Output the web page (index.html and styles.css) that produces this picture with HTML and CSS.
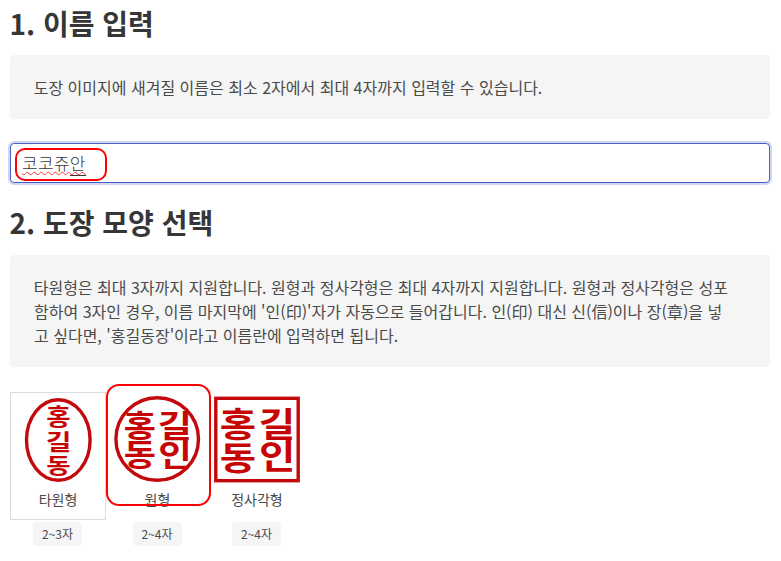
FILE: index.html
```html
<!DOCTYPE html>
<html lang="ko">
<head>
<meta charset="utf-8">
<title>도장 만들기</title>
<link rel="stylesheet" href="styles.css">
</head>
<body>
<main class="page">
  <h2 class="title">1. 이름 입력</h2>
  <div class="notification">도장 이미지에 새겨질 이름은 최소 2자에서 최대 4자까지 입력할 수 있습니다.</div>
  <div class="input"><span class="name">코코쥬<span class="composing">안</span></span><i class="mark mark-name"></i></div>
  <h2 class="title">2. 도장 모양 선택</h2>
  <div class="notification">타원형은 최대 3자까지 지원합니다. 원형과 정사각형은 최대 4자까지 지원합니다. 원형과 정사각형은 성포함하여 3자인 경우, 이름 마지막에 '인(印)'자가 자동으로 들어갑니다. 인(印) 대신 신(信)이나 장(章)을 넣고 싶다면, '홍길동장'이라고 이름란에 입력하면 됩니다.</div>
  <div class="shapes">
    <div class="shape">
      <div class="card selected">
        <svg class="seal" viewBox="0 0 88 88">
          <ellipse cx="44.3" cy="44" rx="31.8" ry="40.3"/>
          <text transform="translate(32.2 28.9) scale(.265 .225)">홍</text>
          <text transform="translate(31.8 53.7) scale(.28 .22)">길</text>
          <text transform="translate(32.2 76.5) scale(.265 .21)">동</text>
        </svg>
        <span class="label">타원형</span>
      </div>
      <span class="tag">2~3자</span>
    </div>
    <div class="shape">
      <div class="card">
        <svg class="seal" viewBox="0 0 88 88">
          <circle cx="43.2" cy="43" r="41.3"/>
          <text transform="translate(9.8 40.8) scale(.35 .31)">홍</text>
          <text transform="translate(43.6 40.6) scale(.375 .31)">길</text>
          <text transform="translate(9.8 70.2) scale(.35 .305)">동</text>
          <text transform="translate(44.2 69.8) scale(.365 .31)">인</text>
        </svg>
        <span class="label">원형</span>
      </div>
      <span class="tag">2~4자</span>
      <i class="mark mark-shape"></i>
    </div>
    <div class="shape">
      <div class="card">
        <svg class="seal" viewBox="0 0 88 88">
          <rect x="2.8" y="2.3" width="82.4" height="82.4"/>
          <text transform="translate(6.8 41) scale(.395 .34)">홍</text>
          <text transform="translate(45.4 41) scale(.4 .345)">길</text>
          <text transform="translate(6.8 74) scale(.395 .335)">동</text>
          <text transform="translate(46 73.4) scale(.395 .34)">인</text>
        </svg>
        <span class="label">정사각형</span>
      </div>
      <span class="tag">2~4자</span>
    </div>
  </div>
</main>
</body>
</html>
```
FILE: styles.css
```css
* { box-sizing: border-box; }
body {
  margin: 0;
  background: #fff;
  color: #4a4a4a;
  font: 16px/24px "Noto Sans CJK KR", sans-serif;
}
.page { width: 780px; padding: 8px 10px 0; }
.title {
  margin: 0 0 16px;
  color: #363636;
  font-size: 28px;
  font-weight: 700;
  line-height: 31px;
  text-indent: -0.5px;
}
.input + .title { margin-bottom: 17px; }
.notification {
  margin-bottom: 24px;
  padding: 20px 40px 20px 24px;
  border-radius: 4px;
  background: #f5f5f5;
  word-break: break-all;
  text-indent: -0.3px;
}
.input {
  position: relative;
  height: 40px;
  margin-bottom: 24px;
  padding: 7px 11px;
  border: 1px solid #485fc7;
  border-radius: 4px;
  box-shadow: 0 0 0 2px rgba(72, 95, 199, .25);
  color: #363636;
}
.name {
  font-size: 17px;
  font-weight: 300;
  letter-spacing: 0.3px;
  text-decoration: underline wavy #f33 1px;
  text-underline-offset: 1px;
}
.composing { border-bottom: 1px solid #363636; }
.mark {
  position: absolute;
  border: 2px solid #f00;
}
.mark-name { left: 4px; top: 4px; width: 92px; height: 33px; border-radius: 10px; }
.mark-shape { left: -4px; top: -8px; width: 105px; height: 122px; border-radius: 13px; }
.shapes { display: flex; gap: 3.5px; padding-top: 1px; }
.shape {
  position: relative;
  display: flex;
  flex-direction: column;
  align-items: center;
  width: 96px;
}
.card {
  display: flex;
  flex-direction: column;
  align-items: center;
  width: 96px;
  height: 128px;
  padding-top: 3px;
  border: 1px solid transparent;
}
.selected { border-color: #dbdbdb; }
.seal { width: 88px; height: 88px; }
.seal ellipse, .seal circle, .seal rect {
  fill: none;
  stroke: #c3090b;
  stroke-width: 3.4;
}
.seal text {
  fill: #c60505;
  font-size: 100px;
  font-weight: 700;
}
.label { margin-top: 3px; font-size: 14px; line-height: 24px; }
.tag {
  width: 49px;
  height: 24px;
  margin: 2px 1px 0 0;
  border-radius: 4px;
  background: #f5f5f5;
  font-size: 12px;
  text-align: center;
}
```
